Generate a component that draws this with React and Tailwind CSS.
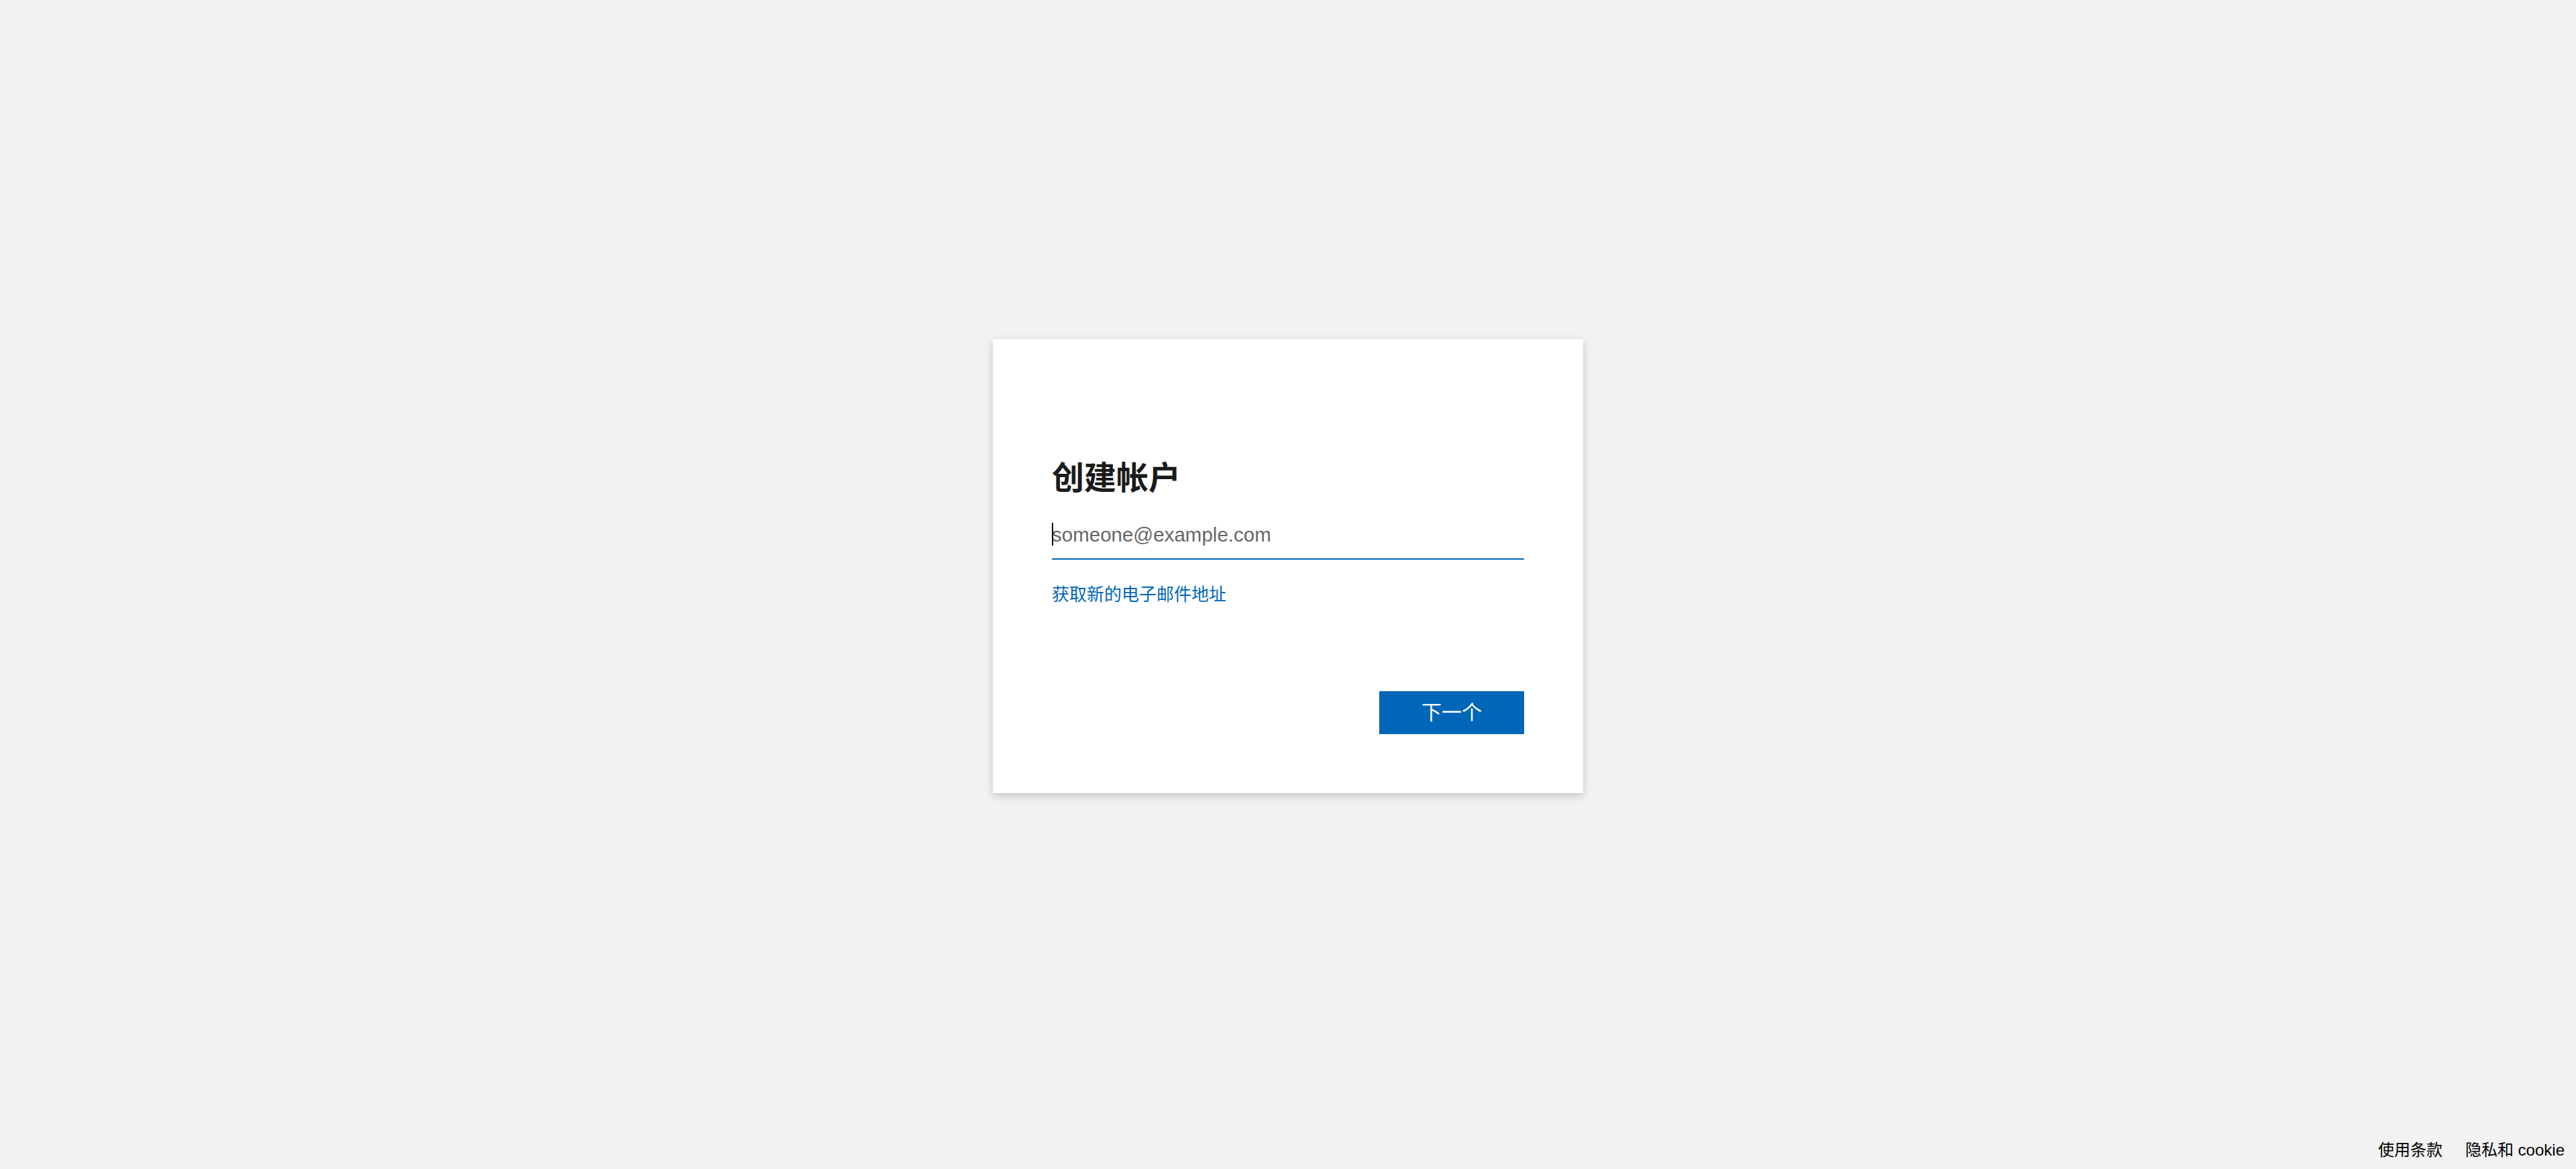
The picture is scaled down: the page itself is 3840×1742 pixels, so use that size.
const latin = "font-['Liberation_Sans','Noto_Sans_CJK_SC',sans-serif]";

const SignupCard = () => {
  return (
    <div className="w-[880px] bg-white p-[88px] shadow-[0_4px_12px_rgba(0,0,0,0.2)]">
      {/* Title */}
      <h1 className="mt-[92px] text-[48px] leading-[56px] font-semibold text-[#1b1b1b]">
        创建帐户
      </h1>

      {/* Email input */}
      <div className="relative mt-[21px] h-[72px] border-b-2 border-[#0067b8]">
        <input
          type="email"
          placeholder="someone@example.com"
          className={`${latin} h-full w-full bg-transparent p-0 text-[29.5px] text-[#1b1b1b] caret-transparent outline-none placeholder:text-[#666]`}
        />
        <span className="pointer-events-none absolute left-0 top-[17px] h-[34px] w-[2px] bg-black" />
      </div>

      {/* Link */}
      <div className="mt-[34px] text-[26px] leading-[36px]">
        <a href="#" className="text-[#0067b8]">
          获取新的电子邮件地址
        </a>
      </div>

      {/* Next button */}
      <div className="mt-[126px] flex justify-end">
        <button className="h-[64px] w-[216px] bg-[#0067b8] text-[30px] text-white">
          下一个
        </button>
      </div>
    </div>
  );
};

export default function App() {
  return (
    <div className={`${latin} flex h-screen flex-col bg-[#f2f2f2]`}>
      <main className="flex flex-1 items-center justify-center">
        <SignupCard />
      </main>

      <footer className="flex h-[56px] items-center justify-end gap-[34px] pr-[17px] text-[24px] leading-[56px] text-black">
        <a href="#">使用条款</a>
        <a href="#">隐私和 cookie</a>
      </footer>
    </div>
  );
}
